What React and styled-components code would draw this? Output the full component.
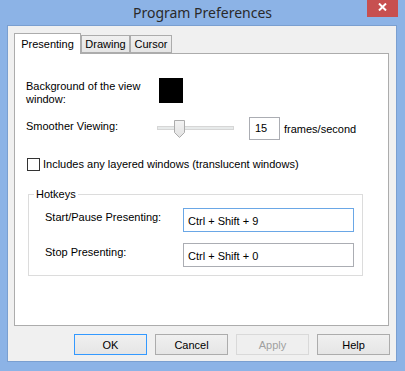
import React, { useState } from "react";
import styled, { createGlobalStyle } from "styled-components";

const GlobalStyle = createGlobalStyle`
  html, body {
    margin: 0;
    padding: 0;
    background: #8cb3e6;
  }
  * {
    box-sizing: border-box;
  }
`;

const Window = styled.div`
  width: 405px;
  height: 371px;
  display: flex;
  flex-direction: column;
  background: #8cb3e6;
  font-family: "Liberation Sans", Arial, sans-serif;
  font-size: 11px;
  color: #000;
`;

const TitleBar = styled.div`
  height: 25px;
  display: grid;
  grid-template-columns: 1fr auto 1fr;
`;

const Title = styled.div`
  grid-column: 2;
  font-family: "Noto Sans", "Liberation Sans", sans-serif;
  font-size: 14px;
  line-height: 25px;
  color: #2a2a2a;
`;

const CloseButton = styled.div`
  grid-column: 3;
  justify-self: end;
  width: 31px;
  height: 17px;
  margin-right: 7px;
  background: #c75050;
  display: flex;
  align-items: center;
  justify-content: center;
  padding-bottom: 3px;
`;

const Client = styled.div`
  flex: 1;
  margin: 0 8px 9px 7px;
  border: 1px solid #7a9fd0;
  background: #f0f0f0;
  padding: 7px 7px 6px 6px;
  display: flex;
  flex-direction: column;
`;

const TabStrip = styled.div`
  height: 20px;
  display: flex;
  align-items: flex-end;
  position: relative;
  z-index: 1;
`;

const Tab = styled.div`
  width: ${(p) => p.$w}px;
  height: ${(p) => (p.$active ? "21px" : "18px")};
  margin-bottom: ${(p) => (p.$active ? "-1px" : "0")};
  border: 1px solid #acacac;
  border-bottom: ${(p) => (p.$active ? "none" : "1px solid #acacac")};
  background: ${(p) =>
    p.$active ? "#fff" : "linear-gradient(#f0f0f0, #e5e5e5)"};
  display: flex;
  align-items: center;
  justify-content: center;
  padding-bottom: ${(p) => (p.$active ? "1px" : "0")};
`;

const Panel = styled.div`
  height: 273px;
  border: 1px solid #acacac;
  background: #fff;
  padding-left: 11px;
`;

const BgRow = styled.div`
  margin-top: 24px;
  display: grid;
  grid-template-columns: 133px 24px;
  align-items: start;
`;

const Label = styled.div`
  line-height: ${(p) => p.$lh || "13px"};
  padding-top: ${(p) => p.$top || "0"};
`;

const ColorSwatch = styled.div`
  width: 24px;
  height: 25px;
  background: ${(p) => p.$color};
`;

const SpeedRow = styled.div`
  margin-top: 11px;
  display: flex;
  align-items: flex-start;
  height: 23px;
`;

const SliderBox = styled.div`
  position: relative;
  width: 77px;
  height: 18px;
  margin-top: 3px;
`;

const Track = styled.div`
  margin-top: 6px;
  height: 4px;
  border: 1px solid #d6d6d6;
  background: #e7eaea;
`;

const Thumb = styled.svg`
  position: absolute;
  top: 0;
`;

const NumberBox = styled.div`
  width: 31px;
  height: 23px;
  margin-left: 15px;
  border: 1px solid #abadb3;
  padding-left: 5px;
  line-height: 21px;
  background: #fff;
`;

const CheckRow = styled.label`
  margin-top: 18px;
  display: flex;
  align-items: center;
  line-height: 13px;
`;

const CheckBox = styled.span`
  width: 13px;
  height: 13px;
  margin-left: 1px;
  margin-right: 3px;
  border: 1px solid #333;
  background: #fff;
`;

const Group = styled.fieldset`
  width: 335px;
  margin: 16px 0 0 2px;
  padding: 0 8px 8px 0;
  border: 1px solid #dcdcdc;
  min-width: 0;
`;

const Legend = styled.legend`
  margin-left: 5px;
  padding: 0 2px;
  line-height: 14px;
`;

const HotkeyRow = styled.div`
  margin-top: ${(p) => p.$gap};
  padding-left: 16px;
  display: grid;
  grid-template-columns: 138px 171px;
  align-items: start;
`;

const KeyInput = styled.div`
  height: 24px;
  border: 1px solid ${(p) => (p.$focus ? "#6aa7e6" : "#abadb3")};
  background: #fff;
  padding-left: 4px;
  display: flex;
  align-items: center;
  padding-top: 2px;
`;

const ButtonRow = styled.div`
  margin-top: 8px;
  margin-right: -1px;
  display: flex;
  justify-content: flex-end;
  gap: 8px;
`;

const Button = styled.button`
  width: 73px;
  height: 21px;
  padding: 0;
  font-family: inherit;
  font-size: 11px;
  color: ${(p) => (p.disabled ? "#a0a0a0" : "#000")};
  background: ${(p) =>
    p.disabled ? "#efefef" : "linear-gradient(#f0f0f0, #e5e5e5)"};
  border: 1px solid
    ${(p) => (p.$default ? "#3399ff" : p.disabled ? "#d9d9d9" : "#acacac")};
  border-radius: 0;
`;

const TABS = [
  { name: "Presenting", width: 67 },
  { name: "Drawing", width: 49 },
  { name: "Cursor", width: 42 },
];

const SLIDER_MIN = 0;
const SLIDER_MAX = 60;

export default function App() {
  const [tab, setTab] = useState("Presenting");
  const [fps] = useState(15);
  const thumbLeft = Math.round(((fps - SLIDER_MIN) / (SLIDER_MAX - SLIDER_MIN)) * 66);

  return (
    <>
      <GlobalStyle />
      <Window>
        <TitleBar>
          <Title>Program Preferences</Title>
          <CloseButton>
            <svg width="9" height="8" viewBox="0 0 9 8">
              <path d="M1 0.5 L8 7.5 M8 0.5 L1 7.5" stroke="#fff" strokeWidth="2" />
            </svg>
          </CloseButton>
        </TitleBar>
        <Client>
          <TabStrip>
            {TABS.map((t) => (
              <Tab
                key={t.name}
                $w={t.width}
                $active={tab === t.name}
                onClick={() => setTab(t.name)}
              >
                {t.name}
              </Tab>
            ))}
          </TabStrip>
          <Panel>
            <BgRow>
              <Label $top="2px">
                Background of the view
                <br />
                window:
              </Label>
              <ColorSwatch $color="#000" />
            </BgRow>
            <SpeedRow>
              <Label $lh="14px" $top="2px" style={{ width: 131 }}>
                Smoother Viewing:
              </Label>
              <SliderBox>
                <Track />
                <Thumb width="11" height="18" viewBox="0 0 11 18" style={{ left: thumbLeft }}>
                  <defs>
                    <linearGradient id="tg" x1="0" y1="0" x2="0" y2="1">
                      <stop offset="0" stopColor="#f3f3f3" />
                      <stop offset="1" stopColor="#e2e2e2" />
                    </linearGradient>
                  </defs>
                  <path
                    d="M0.5 0.5 H10.5 V12.5 L5.5 17.5 L0.5 12.5 Z"
                    fill="url(#tg)"
                    stroke="#acacac"
                  />
                </Thumb>
              </SliderBox>
              <NumberBox>{fps}</NumberBox>
              <Label $lh="14px" $top="5px" style={{ marginLeft: 4 }}>
                frames/second
              </Label>
            </SpeedRow>
            <CheckRow>
              <CheckBox />
              Includes any layered windows (translucent windows)
            </CheckRow>
            <Group>
              <Legend>Hotkeys</Legend>
              <HotkeyRow $gap="7px">
                <Label $lh="14px" $top="2px">Start/Pause Presenting:</Label>
                <KeyInput $focus>Ctrl + Shift + 9</KeyInput>
              </HotkeyRow>
              <HotkeyRow $gap="11px">
                <Label $lh="14px" $top="2px">Stop Presenting:</Label>
                <KeyInput>Ctrl + Shift + 0</KeyInput>
              </HotkeyRow>
            </Group>
          </Panel>
          <ButtonRow>
            <Button $default>OK</Button>
            <Button>Cancel</Button>
            <Button disabled>Apply</Button>
            <Button>Help</Button>
          </ButtonRow>
        </Client>
      </Window>
    </>
  );
}
